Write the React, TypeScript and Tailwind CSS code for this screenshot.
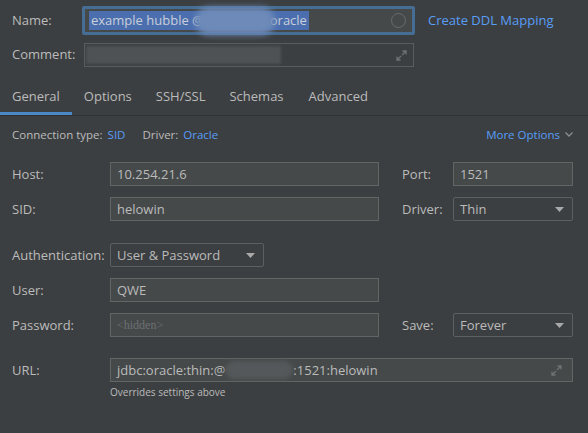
import React from "react";

const font = { fontFamily: '"Open Sans", "Noto Sans", sans-serif' };

function Field({ children, className = "" }: { children?: React.ReactNode; className?: string }) {
  return (
    <div
      className={`flex h-[24px] items-center border border-[#646464] bg-[#45494a] px-[6px] text-[13px] text-[#bbbbbb] ${className}`}
    >
      {children}
    </div>
  );
}

function Select({ value, className = "" }: { value: string; className?: string }) {
  return (
    <div
      className={`flex h-[24px] items-center justify-between rounded-[2px] border border-[#5e6060] bg-[#3c3f41] pl-[6px] pr-[8px] text-[13px] text-[#bbbbbb] ${className}`}
    >
      <span>{value}</span>
      <svg width="9" height="5" viewBox="0 0 9 5">
        <path d="M0 0h9L4.5 5z" fill="#a9a9a9" />
      </svg>
    </div>
  );
}

function Expand() {
  return (
    <svg width="11" height="11" viewBox="0 0 11 11" fill="none" stroke="#6f7274" strokeWidth="1.3">
      <path d="M6.5 1h3.5v3.5M10 1L6 5M4.5 10H1V6.5M1 10l4-4" />
    </svg>
  );
}

export default function App() {
  const tabs = ["General", "Options", "SSH/SSL", "Schemas", "Advanced"];
  return (
    <div className="h-[433px] w-[588px] overflow-hidden bg-[#3c3f41] text-[13px] text-[#bbbbbb]" style={font}>
      {/* name */}
      <div className="flex items-center pt-[6px]">
        <span className="w-[82px] pl-[12px]">Name:</span>
        <div className="rounded-[2px] border-[3px] border-[#466d94] p-0">
          <div className="flex h-[23px] w-[327px] items-center bg-[#45494a] pl-[4px] pr-[6px]">
            <span className="relative bg-[#4b6eaf] px-[2px] leading-[19px] text-[#c9cfd8]">
              example hubble @<span className="inline-block w-[66px]" />oracle
              <span className="absolute left-[106px] top-[-4px] h-[28px] w-[80px] rounded-full bg-[#6d8ab8] blur-[3px]" />
            </span>
            <span className="ml-auto h-[15px] w-[15px] rounded-full border border-[#6a6d70]" />
          </div>
        </div>
        <span className="ml-[13px] text-[#589df6]">Create DDL Mapping</span>
      </div>
      {/* comment */}
      <div className="mt-[8px] flex items-center">
        <span className="w-[84px] pl-[12px]">Comment:</span>
        <div className="flex h-[24px] w-[330px] items-center border border-[#5a5d5f] pl-[1px] pr-[6px]">
          <div className="h-[18px] w-[195px] bg-[#4f5254] blur-[1.5px]" />
          <span className="ml-auto">
            <Expand />
          </span>
        </div>
      </div>
      {/* tabs */}
      <div className="mt-[14px] flex border-b border-[#323232]">
        {tabs.map((t, i) => (
          <div
            key={t}
            className={`flex h-[34px] items-center border-b-[3px] px-[12px] ${
              i === 0 ? "border-[#4a88c7]" : "border-transparent"
            } ${i === 4 ? "pl-[13px]" : ""}`}
          >
            {t}
          </div>
        ))}
      </div>
      {/* connection type */}
      <div className="mt-[10px] flex items-center pl-[12px] pr-[15px] text-[11.5px]">
        <span>Connection type:</span>
        <span className="ml-[5px] text-[#589df6]">SID</span>
        <span className="ml-[17px]">Driver:</span>
        <span className="ml-[5px] text-[#589df6]">Oracle</span>
        <span className="ml-auto flex items-center text-[#589df6]">
          More Options
          <svg className="ml-[5px]" width="8" height="5" viewBox="0 0 8 5" fill="none" stroke="#8c8e90" strokeWidth="1.3">
            <path d="M0.5 0.5L4 4L7.5 0.5" />
          </svg>
        </span>
      </div>
      {/* form */}
      <div className="mt-[19px] grid grid-cols-[98px_269px_74px_120px] items-center gap-y-[11px] pl-[12px]">
        <span>Host:</span>
        <Field>10.254.21.6</Field>
        <span className="pl-[23px]">Port:</span>
        <Field>1521</Field>

        <span>SID:</span>
        <Field>helowin</Field>
        <span className="pl-[23px]">Driver:</span>
        <Select value="Thin" />
      </div>
      <div className="mt-[22px] grid grid-cols-[98px_269px_74px_120px] items-center gap-y-[11px] pl-[12px]">
        <span>Authentication:</span>
        <Select value="User & Password" className="w-[154px]" />
        <span />
        <span />

        <span>User:</span>
        <Field>QWE</Field>
        <span />
        <span />

        <span>Password:</span>
        <Field className="border-[#575a5c] bg-[#3c3f41]">
          <span className="text-[12px] text-[#6e7072]" style={{ fontFamily: '"Liberation Serif", serif' }}>
            &lt;hidden&gt;
          </span>
        </Field>
        <span className="pl-[23px]">Save:</span>
        <Select value="Forever" />
      </div>
      <div className="mt-[21px] grid grid-cols-[98px_463px] items-center pl-[12px]">
        <span>URL:</span>
        <Field className="pr-[10px]">
          <span>jdbc:oracle:thin:@</span>
          <span className="inline-block h-[18px] w-[68px] rounded-full bg-[#55585a] blur-[2px]" />
          <span>:1521:helowin</span>
          <span className="ml-auto">
            <Expand />
          </span>
        </Field>
        <span />
        <span className="mt-[3px] text-[10px]">Overrides settings above</span>
      </div>
    </div>
  );
}
